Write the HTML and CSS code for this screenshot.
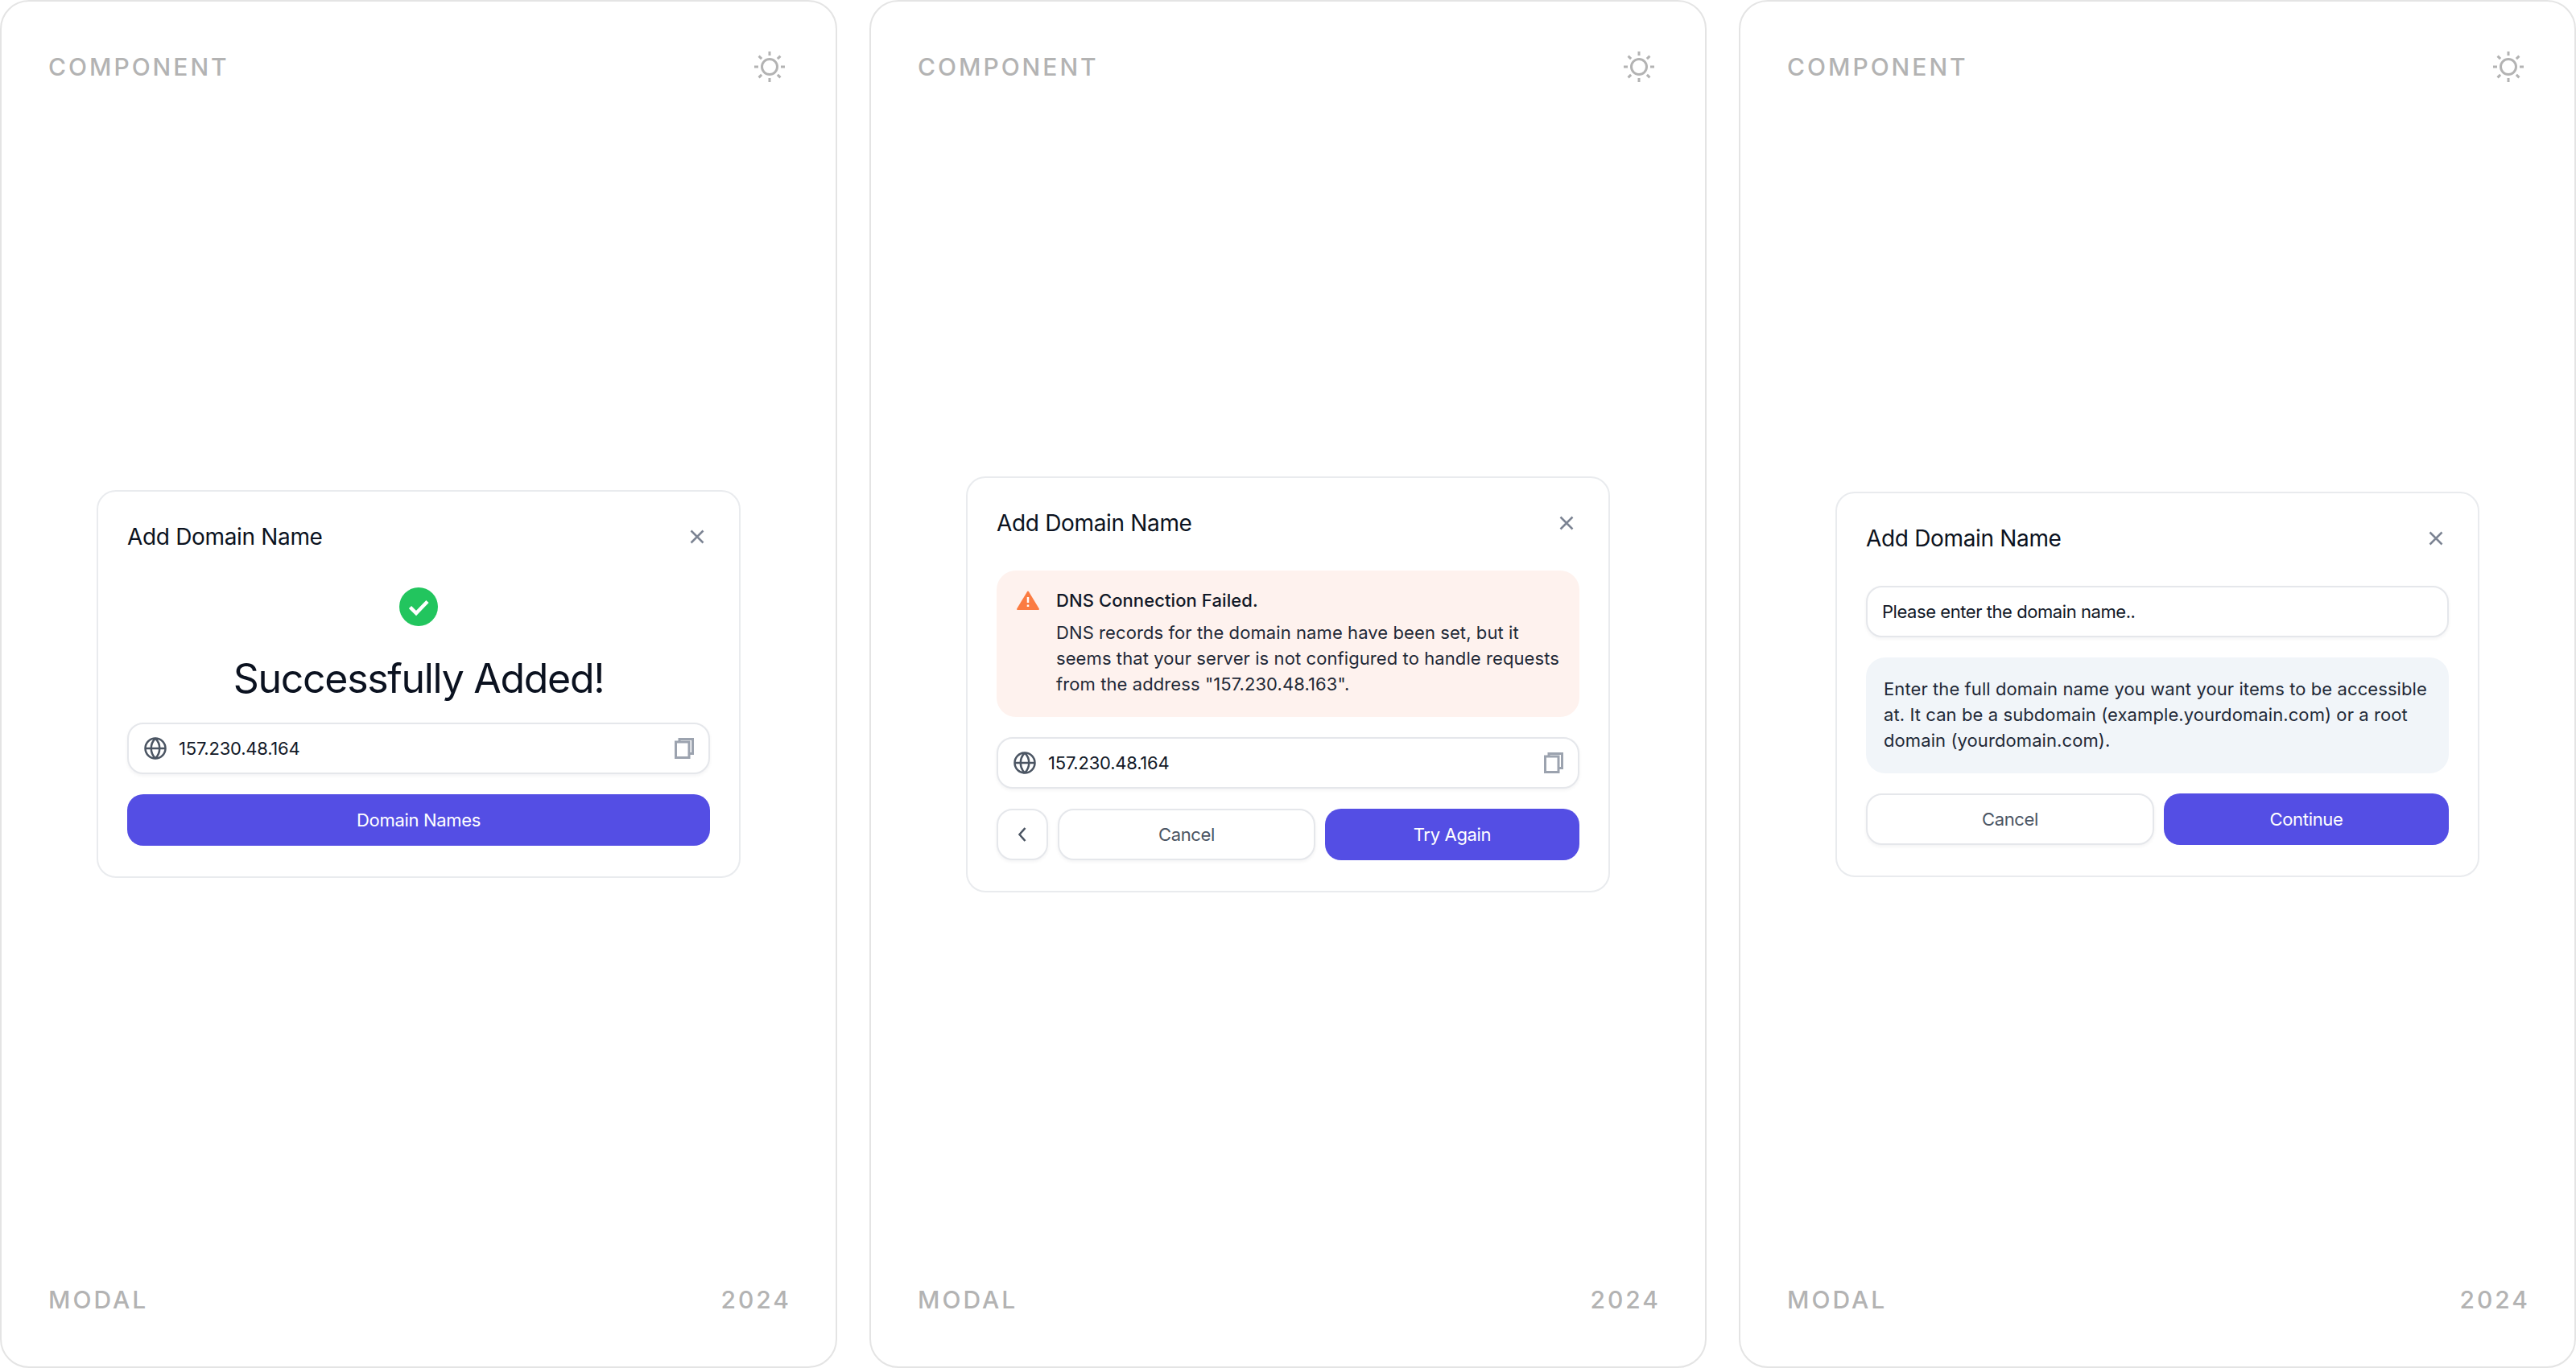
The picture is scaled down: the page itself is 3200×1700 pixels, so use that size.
FILE: index.html
```html
<!DOCTYPE html>
<html lang="en">
<head>
  <meta charset="UTF-8" />
  <title>Modal components</title>
  <link rel="stylesheet" href="styles.css">
</head>
<body>
  <svg class="sprite" width="0" height="0" aria-hidden="true">
    <symbol id="sun" viewBox="0 0 40 40">
      <circle cx="20" cy="20" r="9.5" />
      <path d="M20 1v5M20 34v5M1 20h5M34 20h5M6.6 6.6l3.5 3.5M29.9 29.9l3.5 3.5M6.6 33.4l3.5-3.5M29.9 10.1l3.5-3.5" />
    </symbol>
    <symbol id="close" viewBox="0 0 18 18">
      <path d="M1.5 1.5l15 15M16.5 1.5l-15 15" />
    </symbol>
    <symbol id="globe" viewBox="0 0 28 28">
      <circle cx="14" cy="14" r="12.5" />
      <path d="M1.5 14h25M14 1.5c-7 7-7 18 0 25M14 1.5c7 7 7 18 0 25" />
    </symbol>
    <symbol id="copy" viewBox="0 0 24 26">
      <path d="M6 5V1.5h16.500v18H18" />
      <rect x="1.500" y="5" width="16.500" height="19.500" />
    </symbol>
  </svg>

  <main class="board">
    <!-- success -->
    <section class="panel">
      <header class="panel-top">
        <span class="label">COMPONENT</span>
        <svg class="sun"><use href="#sun" /></svg>
      </header>
      <div class="modal">
        <div class="modal-head">
          <h2>Add Domain Name</h2>
          <svg class="close"><use href="#close" /></svg>
        </div>
        <div class="modal-body">
          <div class="success">
            <svg class="check" viewBox="0 0 48 48">
              <circle cx="24" cy="24" r="24" fill="#22c55e" />
              <path d="M13.500 24.500l7.500 7.500 14-14.500" fill="none" stroke="#fff" stroke-width="4.500" />
            </svg>
            <h1>Successfully Added!</h1>
          </div>
          <div class="field">
            <svg class="globe"><use href="#globe" /></svg>
            <span class="ip">157.230.48.164</span>
            <svg class="copy"><use href="#copy" /></svg>
          </div>
          <button class="btn primary">Domain Names</button>
        </div>
      </div>
      <footer class="panel-bottom">
        <span class="label">MODAL</span>
        <span class="label year">2024</span>
      </footer>
    </section>

    <!-- error -->
    <section class="panel">
      <header class="panel-top">
        <span class="label">COMPONENT</span>
        <svg class="sun"><use href="#sun" /></svg>
      </header>
      <div class="modal">
        <div class="modal-head">
          <h2>Add Domain Name</h2>
          <svg class="close"><use href="#close" /></svg>
        </div>
        <div class="modal-body">
          <div class="alert">
            <svg class="warn" viewBox="0 0 28 24">
              <path d="M14 1.500L27 23H1z" fill="#fb7c42" stroke="#fb7c42" stroke-width="2" stroke-linejoin="round" />
              <path d="M14 8v7M14 17.500v2.500" stroke="#fff" stroke-width="2.500" />
            </svg>
            <div>
              <p class="alert-title">DNS Connection Failed.</p>
              <p>DNS records for the domain name have been set, but it seems that your server is not configured to handle requests from the address "157.230.48.163".</p>
            </div>
          </div>
          <div class="field">
            <svg class="globe"><use href="#globe" /></svg>
            <span class="ip">157.230.48.164</span>
            <svg class="copy"><use href="#copy" /></svg>
          </div>
          <div class="actions">
            <button class="btn back">
              <svg class="chevron" viewBox="0 0 12 20"><path d="M9.500 2L2.500 10l7 8" /></svg>
            </button>
            <button class="btn">Cancel</button>
            <button class="btn primary">Try Again</button>
          </div>
        </div>
      </div>
      <footer class="panel-bottom">
        <span class="label">MODAL</span>
        <span class="label year">2024</span>
      </footer>
    </section>

    <!-- default -->
    <section class="panel">
      <header class="panel-top">
        <span class="label">COMPONENT</span>
        <svg class="sun"><use href="#sun" /></svg>
      </header>
      <div class="modal">
        <div class="modal-head">
          <h2>Add Domain Name</h2>
          <svg class="close"><use href="#close" /></svg>
        </div>
        <div class="modal-body">
          <div class="field">
            <span class="placeholder">Please enter the domain name..</span>
          </div>
          <p class="info">Enter the full domain name you want your items to be accessible at. It can be a subdomain (example.yourdomain.com) or a root domain (yourdomain.com).</p>
          <div class="actions">
            <button class="btn">Cancel</button>
            <button class="btn primary">Continue</button>
          </div>
        </div>
      </div>
      <footer class="panel-bottom">
        <span class="label">MODAL</span>
        <span class="label year">2024</span>
      </footer>
    </section>
  </main>
</body>
</html>
```

FILE: styles.css
```css
* {
  box-sizing: border-box;
}

body {
  margin: 0;
  background-color: #fff;
  font-family: "Inter", "Liberation Sans", sans-serif;
  color: #111827;
}

h1, h2, p {
  margin: 0;
  font-weight: 400;
}

.sprite {
  position: absolute;
}

.board {
  display: grid;
  grid-template-columns: repeat(3, 1040px);
  gap: 40px;
  height: 1700px;
}

.panel {
  display: grid;
  grid-template-rows: 1fr auto 1fr;
  justify-items: center;
  border: 2px solid #e4e4e4;
  border-radius: 36px;
  padding: 0 58px;
}

.panel-top,
.panel-bottom {
  display: flex;
  justify-content: space-between;
  align-items: center;
  width: 100%;
  height: 40px;
}

.panel-top {
  margin-top: 61px;
  padding-right: 4px;
}

.panel-bottom {
  align-self: end;
  margin-bottom: 63px;
}

.label {
  font-size: 30px;
  font-weight: 500;
  letter-spacing: 3px;
  color: #b3b3b3;
}

.year {
  margin-right: -3px;
}

.sun {
  width: 40px;
  height: 40px;
  fill: none;
  stroke: #b3b3b3;
  stroke-width: 3px;
}

.modal {
  width: 800px;
  border: 2px solid #e9ebee;
  border-radius: 24px;
  padding: 36px 36px 38px;
  background-color: #fff;
}

.modal-head {
  display: flex;
  justify-content: space-between;
  align-items: center;
  height: 40px;
  margin-bottom: 39px;
}

.modal-head h2 {
  font-size: 28px;
  letter-spacing: -0.012em;
  color: #0b1220;
}

.close {
  width: 18px;
  height: 18px;
  margin-right: 7px;
  fill: none;
  stroke: #7c8493;
  stroke-width: 2.500px;
}

.modal-body {
  display: flex;
  flex-direction: column;
  gap: 25px;
}

.success {
  display: flex;
  flex-direction: column;
  align-items: center;
  gap: 35px;
  padding-top: 4px;
}

.check {
  width: 48px;
  height: 48px;
}

.success h1 {
  font-size: 50px;
  line-height: 60px;
  letter-spacing: -0.026em;
  color: #0b1220;
}

.field {
  display: flex;
  align-items: center;
  height: 64px;
  border: 2px solid #e5e7eb;
  border-radius: 20px;
  padding: 0 18px 0 19px;
  background-color: #fff;
  box-shadow: 0 2px 4px rgba(17, 24, 39, 0.05);
}

.globe {
  width: 28px;
  height: 28px;
  fill: none;
  stroke: #4b5563;
  stroke-width: 2.500px;
}

.ip {
  margin-left: 15px;
  font-size: 22px;
  letter-spacing: -0.01em;
}

.placeholder {
  margin-left: -1px;
  font-size: 22px;
  letter-spacing: -0.02em;
}

.copy {
  width: 24px;
  height: 26px;
  margin-left: auto;
  fill: #fff;
  stroke: #9ca3af;
  stroke-width: 3px;
}

.btn {
  height: 64px;
  border: 2px solid #e5e7eb;
  border-radius: 20px;
  background-color: #fff;
  box-shadow: 0 2px 4px rgba(17, 24, 39, 0.05);
  font-family: inherit;
  font-size: 22px;
  letter-spacing: -0.015em;
  color: #4b5563;
}

.primary {
  border: 0;
  background-color: #544ee4;
  box-shadow: none;
  color: #fff;
}

.back {
  flex: none;
  width: 64px;
  padding: 0;
}

.chevron {
  display: block;
  width: 12px;
  height: 20px;
  margin: 0 auto;
  fill: none;
  stroke: #4b5563;
  stroke-width: 2.500px;
}

.actions {
  display: flex;
  gap: 12px;
}

.actions .btn {
  flex: 1;
}

.actions .back {
  flex: none;
}

.alert {
  display: flex;
  gap: 21px;
  border-radius: 24px;
  padding: 21px 14px 25px 25px;
  background-color: #fef2ee;
  font-size: 22px;
  line-height: 32px;
  letter-spacing: 0.004em;
  color: #1f2937;
}

.warn {
  flex: none;
  width: 28px;
  height: 24px;
  margin-top: 4px;
}

.alert-title {
  margin-bottom: 8px;
  font-weight: 500;
  color: #111827;
}

.info {
  border-radius: 24px;
  padding: 23px 22px 25px;
  background-color: #f1f5f9;
  font-size: 22px;
  line-height: 32px;
  letter-spacing: 0.004em;
  color: #1f2937;
}
```
